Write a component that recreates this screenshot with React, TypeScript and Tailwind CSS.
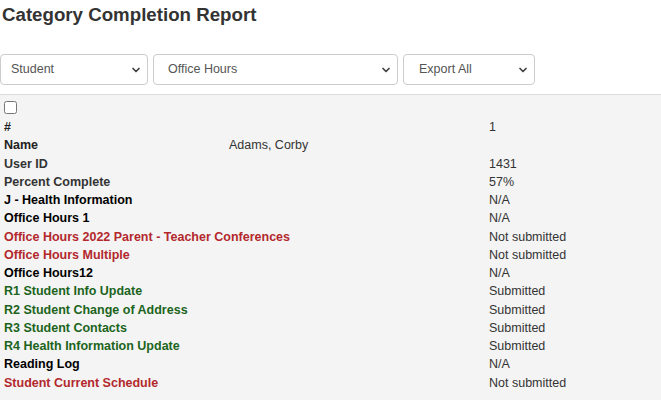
import { ChevronDown } from "lucide-react";

type Row = { label: string; value: string; tone?: "red" | "green" | "black" | "dark" };

const ROWS: Row[] = [
  { label: "User ID", value: "1431", tone: "dark" },
  { label: "Percent Complete", value: "57%", tone: "dark" },
  { label: "J - Health Information", value: "N/A", tone: "black" },
  { label: "Office Hours 1", value: "N/A", tone: "black" },
  { label: "Office Hours 2022 Parent - Teacher Conferences", value: "Not submitted", tone: "red" },
  { label: "Office Hours Multiple", value: "Not submitted", tone: "red" },
  { label: "Office Hours12", value: "N/A", tone: "black" },
  { label: "R1 Student Info Update", value: "Submitted", tone: "green" },
  { label: "R2 Student Change of Address", value: "Submitted", tone: "green" },
  { label: "R3 Student Contacts", value: "Submitted", tone: "green" },
  { label: "R4 Health Information Update", value: "Submitted", tone: "green" },
  { label: "Reading Log", value: "N/A", tone: "black" },
  { label: "Student Current Schedule", value: "Not submitted", tone: "red" },
];

const toneClass = {
  red: "text-[#b3282d]",
  green: "text-[#1c641c]",
  black: "text-black",
  dark: "text-[#333]",
};

function Select({ label, width, pad }: { label: string; width: string; pad: string }) {
  return (
    <div
      className={`${width} ${pad} h-[31px] rounded-[4px] border border-[#ccc] bg-white flex items-center justify-between pr-[5px] text-[12.5px] text-[#555]`}
    >
      <span>{label}</span>
      <ChevronDown className="w-[12px] h-[12px] text-[#444]" strokeWidth={3.5} />
    </div>
  );
}

export default function App() {
  return (
    <div className="min-h-screen w-full bg-white font-['Liberation_Sans',Arial,sans-serif] flex flex-col">
      <h1 className="pl-[2px] pt-[3px] text-[18.7px] leading-[24px] font-bold text-[#333]">
        Category Completion Report
      </h1>

      <div className="flex gap-[5px] mt-[27px]">
        <Select label="Student" width="w-[148px]" pad="pl-[10px]" />
        <Select label="Office Hours" width="w-[245px]" pad="pl-[14px]" />
        <Select label="Export All" width="w-[132px]" pad="pl-[15px]" />
      </div>

      <div className="mt-[9px] flex-1 border-t border-[#ddd] bg-[#f4f4f4] pl-[4px] pt-[6px] text-[12.5px]">
        <input type="checkbox" className="block w-[13px] h-[13px] m-0" />
        <div className="grid grid-cols-[225px_260px_1fr] mt-[4px]">
          <div className="leading-[18.25px] font-bold text-[#222]">#</div>
          <div />
          <div className="leading-[18.25px] text-[#333]">1</div>

          <div className="leading-[18.25px] font-bold text-[#222]">Name</div>
          <div className="leading-[18.25px] text-[#333]">Adams, Corby</div>
          <div />

          {ROWS.map((r) => (
            <div key={r.label} className="contents">
              <div className={`col-span-2 leading-[18.25px] font-bold ${toneClass[r.tone ?? "dark"]}`}>
                {r.label}
              </div>
              <div className="leading-[18.25px] text-[#333]">{r.value}</div>
            </div>
          ))}
        </div>
      </div>
    </div>
  );
}
